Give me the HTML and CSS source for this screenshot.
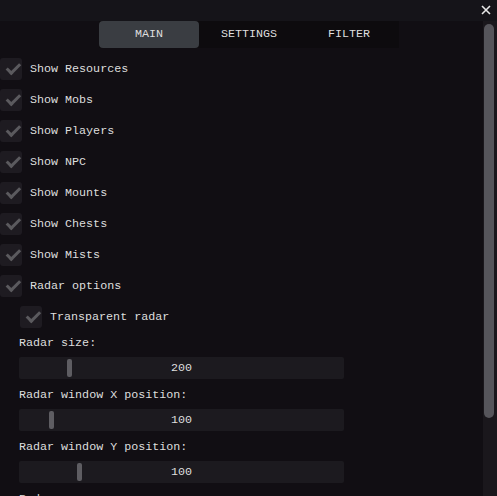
FILE: index.html
```html
<!DOCTYPE html>
<html lang="en">
<head>
    <meta charset="UTF-8">
    <meta name="viewport" content="width=device-width, initial-scale=1.0">
    <title>Radar</title>
    <link rel="stylesheet" href="styles.css">
</head>
<body>
    <div class="window">
        <div class="titlebar">
            <span class="close">
                <svg width="10" height="10" viewBox="0 0 10 10"><path d="M1 1 L9 9 M9 1 L1 9" stroke="#e8e8e8" stroke-width="1.6"/></svg>
            </span>
        </div>

        <div class="body">
            <div class="content">
                <div class="tabs">
                    <div class="tab active">MAIN</div>
                    <div class="tab">SETTINGS</div>
                    <div class="tab">FILTER</div>
                </div>

                <div class="rows">
                    <label class="check"><span class="box"></span>Show Resources</label>
                    <label class="check"><span class="box"></span>Show Mobs</label>
                    <label class="check"><span class="box"></span>Show Players</label>
                    <label class="check"><span class="box"></span>Show NPC</label>
                    <label class="check"><span class="box"></span>Show Mounts</label>
                    <label class="check"><span class="box"></span>Show Chests</label>
                    <label class="check"><span class="box"></span>Show Mists</label>
                    <label class="check"><span class="box"></span>Radar options</label>
                </div>

                <div class="group">
                    <label class="check"><span class="box"></span>Transparent radar</label>

                    <div class="field">
                        <div class="label">Radar size:</div>
                        <div class="slider"><span class="grab" style="left: 48px"></span>200</div>
                    </div>
                    <div class="field">
                        <div class="label">Radar window X position:</div>
                        <div class="slider"><span class="grab" style="left: 30px"></span>100</div>
                    </div>
                    <div class="field">
                        <div class="label">Radar window Y position:</div>
                        <div class="slider"><span class="grab" style="left: 58px"></span>100</div>
                    </div>
                    <div class="field">
                        <div class="label">Radar</div>
                    </div>
                </div>
            </div>

            <div class="scrollbar"><div class="thumb"></div></div>
        </div>
    </div>
</body>
</html>
```

FILE: styles.css
```css
body {
    margin: 0;
    background: #110e13;
    font-family: "Liberation Mono", "DejaVu Sans Mono", monospace;
    font-size: 11.7px;
    color: #dedede;
}

.window {
    width: 497px;
    height: 496px;
    display: flex;
    flex-direction: column;
    overflow: hidden;
}

.titlebar {
    height: 21px;
    flex: none;
    background: #151419;
    display: flex;
    justify-content: flex-end;
    align-items: center;
    padding-right: 6px;
}

.close {
    display: flex;
    margin-top: -1px;
}

.body {
    flex: 1;
    display: flex;
    min-height: 0;
}

.content {
    flex: 1;
    min-width: 0;
}

.tabs {
    display: flex;
    margin-left: 99px;
    width: 300px;
    height: 27px;
    background: #0d0b0e;
}

.tab {
    width: 100px;
    display: flex;
    align-items: center;
    justify-content: center;
    padding-bottom: 1px;
}

.tab.active {
    background: #3a3d42;
    border-radius: 4px;
}

.rows {
    display: flex;
    flex-direction: column;
    gap: 9px;
    margin-top: 10px;
}

.check {
    display: flex;
    align-items: center;
    gap: 8px;
    height: 22px;
}

.box {
    width: 22px;
    height: 22px;
    flex: none;
    background: #1e1b21;
    border-radius: 3px;
    position: relative;
}

.box::after {
    content: "";
    position: absolute;
    left: 5px;
    top: 4px;
    width: 11px;
    height: 5px;
    border-left: 3px solid #5b5a5e;
    border-bottom: 3px solid #5b5a5e;
    transform: rotate(-45deg) translate(0, 2px);
}

.group {
    margin: 9px 0 0 20px;
}

.field {
    margin-left: -1px;
}

.label {
    line-height: 14px;
    margin-top: 8px;
}

.field + .field .label {
    margin-top: 9px;
}

.slider {
    position: relative;
    width: 325px;
    height: 22px;
    margin-top: 7px;
    background: #1c1a1f;
    border-radius: 2px;
    display: flex;
    align-items: center;
    justify-content: center;
}

.grab {
    position: absolute;
    top: 2px;
    width: 5px;
    height: 18px;
    background: #5e5d62;
    border-radius: 2px;
}

.scrollbar {
    width: 14px;
    flex: none;
    background: #1a171c;
    padding: 3px 3px 0 1px;
    box-sizing: border-box;
}

.thumb {
    height: 394px;
    background: #56555b;
    border-radius: 5px;
}
```
